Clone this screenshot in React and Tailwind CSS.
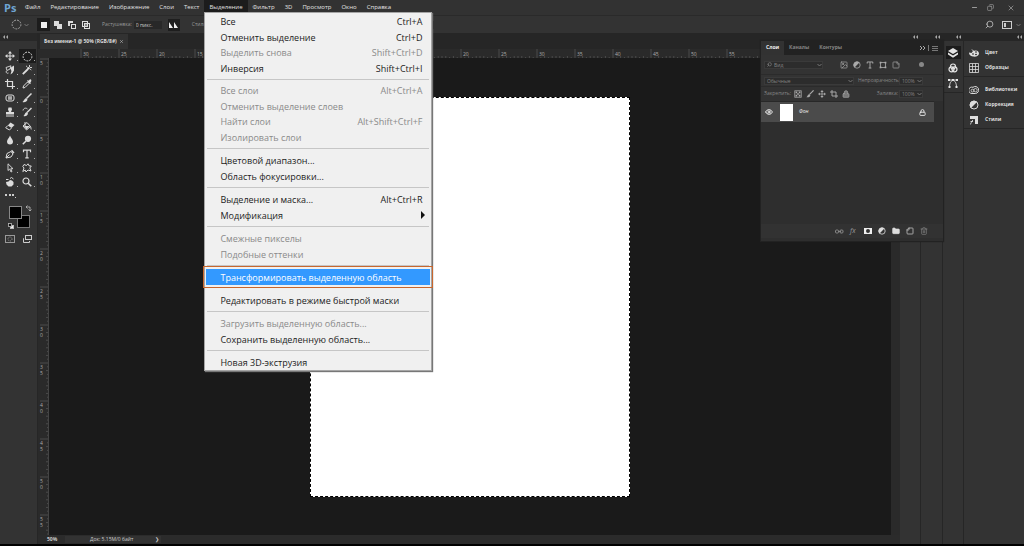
import { Image, Type, Search, Trash2, Folder, Lock, Eye, Copy, Minus, X, StickyNote } from "lucide-react";

const menus = ["Файл", "Редактирование", "Изображение", "Слои", "Текст", "Выделение", "Фильтр", "3D", "Просмотр", "Окно", "Справка"];

const groups = [
  [
    { label: "Все", keys: "Ctrl+A" },
    { label: "Отменить выделение", keys: "Ctrl+D" },
    { label: "Выделить снова", keys: "Shift+Ctrl+D", off: true },
    { label: "Инверсия", keys: "Shift+Ctrl+I" },
  ],
  [
    { label: "Все слои", keys: "Alt+Ctrl+A", off: true },
    { label: "Отменить выделение слоев", off: true },
    { label: "Найти слои", keys: "Alt+Shift+Ctrl+F", off: true },
    { label: "Изолировать слои", off: true },
  ],
  [{ label: "Цветовой диапазон..." }, { label: "Область фокусировки..." }],
  [{ label: "Выделение и маска...", keys: "Alt+Ctrl+R" }, { label: "Модификация", sub: true }],
  [{ label: "Смежные пикселы", off: true }, { label: "Подобные оттенки", off: true }],
  [{ label: "Трансформировать выделенную область", active: true }],
  [{ label: "Редактировать в режиме быстрой маски" }],
  [{ label: "Загрузить выделенную область...", off: true }, { label: "Сохранить выделенную область..." }],
  [{ label: "Новая 3D-экструзия" }],
];

const groupHeight = { 1: "h-[16px]", 2: "h-[32px]", 4: "h-[62px]" };

function SelectMenu() {
  return (
    <div className="absolute left-0 top-[12px] z-30 w-[228px] border border-[#a5a5a5] bg-[#f0f0f0] px-px pt-px text-[9px] text-[#1c1c1c] shadow-[1px_1px_1px_#777]">
      {groups.map((group, i) => (
        <div key={i}>
          {i > 0 && (
            <div className="flex h-[7px] items-center px-px">
              <hr className={"w-full " + (groups[i - 1][0].active ? "border-transparent" : "border-[#c6c6c6]")} />
            </div>
          )}
          <div className={"grid auto-rows-fr " + groupHeight[group.length]}>
            {group.map((item) => (
              <button
                key={item.label}
                disabled={item.off}
                className={
                  "flex items-center justify-between whitespace-nowrap pl-[14px] pr-[8px] leading-[15px] " +
                  (item.active ? "bg-[#3399ff] text-white outline outline-offset-2 outline-[#c8662d]" : item.off ? "text-[#8a8a8a]" : "")
                }
              >
                <span>{item.label}</span>
                {item.keys && <span>{item.keys}</span>}
                {item.sub && <svg width="5" height="8" viewBox="0 0 5 8" className="-mr-1"><path d="M0 0 L4 4 L0 8Z" fill="#111" /></svg>}
              </button>
            ))}
          </div>
        </div>
      ))}
    </div>
  );
}

function Chevron() {
  return (
    <svg width="5" height="4" viewBox="0 0 5 4" className="shrink-0">
      <path d="M.5 1L2.5 3L4.5 1" fill="none" stroke="#777" />
    </svg>
  );
}

function Arrows() {
  return (
    <svg width="5" height="4" viewBox="0 0 5 4" fill="#aaa">
      <path d="M2 0V4L0 2ZM5 0V4L3 2Z" />
    </svg>
  );
}

// Small 10x10 glyphs shared by the toolbar and the panels
function Glyph({ children, size = 10 }) {
  return (
    <svg width={size} height={size} viewBox="0 0 10 10" fill="currentColor" stroke="none" className="shrink-0">
      {children}
    </svg>
  );
}

const line = { fill: "none", stroke: "currentColor" };

const MoveIcon = (p) => (
  <Glyph {...p}>
    <path d="M5 0L7 2.4H3ZM5 10L3 7.600H7ZM0 5L2.400 3V7ZM10 5L7.600 7V3Z" />
    <path d="M5 2V8M2 5H8" {...line} />
  </Glyph>
);
const Marquee = () => (
  <Glyph size={11}><circle cx="5" cy="5" r="4" {...line} strokeDasharray="1.7 1" strokeWidth=".9" /></Glyph>
);
const LassoIcon = () => (
  <Glyph>
    <path d="M1 2.500L6 .8L5 4L2 5.500ZM2 5.500C0 7 2 9 3.500 8" {...line} strokeWidth=".9" />
    <path d="M5 3L9 .5V5.500L7.500 8L5.500 9.500L6.500 6Z" />
  </Glyph>
);
const WandIcon = () => (
  <Glyph>
    <path d="M.8 9.200L6 4" {...line} strokeWidth="1.800" />
    <path d="M7.500 0V2M10 2.500H8M9.300 5L8 4M4 .8L5.500 2.200" {...line} strokeWidth=".9" />
    <circle cx="6.500" cy="3.300" r="1.200" />
  </Glyph>
);
const CropIcon = (p) => (
  <Glyph {...p}><path d="M2.500 0V7.500H10M0 2.500H7.500V10" {...line} strokeWidth="1.200" /></Glyph>
);
const DropperIcon = () => (
  <Glyph>
    <path d="M1 9L1.500 7L5.500 3L7 4.500L3 8.500Z" {...line} />
    <path d="M5 2L8 5L9 4.200L8.300 3.500C10 2 9.500 0 8 .2L6.500 1.700L5.800 1Z" />
  </Glyph>
);
const PatchIcon = () => (
  <Glyph>
    <rect x="1" y="2" width="8" height="6" rx="2" {...line} />
    <rect x="3" y="3.200" width="4" height="3.600" opacity=".7" />
  </Glyph>
);
const BrushIcon = (p) => (
  <Glyph {...p}>
    <path d="M9.500 .5L4.500 5.500" {...line} strokeWidth="1.500" />
    <path d="M4 5L5.500 6.500C5 9 2.500 9.500 .5 9C2 8 2 6 4 5Z" />
  </Glyph>
);
const StampIcon = () => (
  <Glyph><path d="M3.500 .5H6.500L7 2.500L6 5H9V7.500H1V5H4L3 2.500ZM1 8.500H9V9.500H1Z" /></Glyph>
);
const HistoryBrushIcon = () => (
  <Glyph>
    <path d="M9.500 1L5 5.500" {...line} strokeWidth="1.500" />
    <path d="M4.500 5L6 6.500C5.500 9 3.500 9.500 1.500 9C3 8 2.500 6 4.500 5Z" />
    <path d="M1 3.500C1.500 1 4 .5 5.500 2" {...line} strokeWidth=".9" />
  </Glyph>
);
const EraserIcon = () => (
  <Glyph>
    <path d="M5.500 1.500L9.500 4L6.500 7L2.800 4.500Z" />
    <path d="M2.800 4.500L.7 6.800L4.500 9L6.500 7" {...line} />
  </Glyph>
);
const BucketIcon = () => (
  <Glyph>
    <path d="M1 5L5 1.500L8.500 5.500L4.500 9ZM3 5L3 1" {...line} />
    <path d="M2 5H8L4.500 8.500Z" />
    <path d="M8 5C9.500 5.500 9.800 7 9.300 9C8.300 8 8.500 6.500 8 5Z" />
  </Glyph>
);
const DropIcon = () => (
  <Glyph><path d="M5 .5C5.500 2.500 8 4.500 8 6.600A3 3 0 0 1 2 6.600C2 4.500 4.500 2.500 5 .5Z" /></Glyph>
);
const DodgeIcon = () => (
  <Glyph>
    <circle cx="6" cy="3.800" r="3.100" />
    <path d="M4 6L.8 9.200" {...line} strokeWidth="1.500" />
  </Glyph>
);
const PenIcon = () => (
  <Glyph>
    <path d="M1 9L2 4.500L6 2.500L8 5L6 8ZM1 9L4.500 5.500" {...line} />
    <path d="M6 2L7 .8L9.500 3.500L8.300 4.500Z" />
  </Glyph>
);
const TypeIcon = (p) => (
  <Glyph {...p}>
    <path d="M1.500 3.200V1.200H8.500V3.200M5 1.200V8.800M3.300 8.800H6.700" {...line} strokeWidth="1.200" />
  </Glyph>
);
const ArrowIcon = () => (
  <Glyph><path d="M3 .8V7.500L4.700 6L6 9L7 8.500L5.800 5.700H8Z" {...line} strokeWidth=".9" /></Glyph>
);
const ShapeIcon = () => (
  <Glyph><path d="M2 1.500L4.500 2.500L6 .8L7 2.800L9.300 3L7.800 5L9 8L6 7L4 9L3.200 7L.8 8.500L2 5L.8 3.500Z" {...line} /></Glyph>
);
const HandIcon = () => (
  <Glyph>
    <path d="M1 5L3.500 4.500L5 3L7 3.500L8.500 5V7.500L6.500 9.500H3.500L1.500 7.500Z" />
    <path d="M1 2.500H3.500M5 1.500L6.500 .5L8.500 2" {...line} />
  </Glyph>
);
const ZoomIcon = () => (
  <Glyph><circle cx="4" cy="4" r="3" {...line} strokeWidth="1.200" /><path d="M6.200 6.200L9.300 9.300" {...line} strokeWidth="1.600" /></Glyph>
);
const AdjustIcon = (p) => (
  <Glyph {...p}><circle cx="5" cy="5" r="4" {...line} /><path d="M8 2A4.200 4.200 0 0 0 2 8Z" /></Glyph>
);
const FrameIcon = (p) => (
  <Glyph {...p}>
    <rect x="2" y="2" width="6" height="6" {...line} />
    <path d="M.8 .8H3V3H.8ZM7 .8H9.200V3H7ZM.8 7H3V9.200H.8ZM7 7H9.200V9.200H7Z" />
  </Glyph>
);
const CheckerIcon = (p) => (
  <Glyph {...p}><rect x="1" y="1" width="8" height="8" {...line} /><path d="M2 2H4V4H2ZM6 2H8V4H6ZM4 4H6V6H4ZM2 6H4V8H2ZM6 6H8V8H6Z" /></Glyph>
);
const LayersIcon = () => (
  <Glyph><path d="M5 0L10 3L5 6L0 3Z" /><path d="M0 4.500L5 7.500L10 4.500V6.500L5 9.700L0 6.500Z" /></Glyph>
);
const ChannelsIcon = () => (
  <Glyph>
    <circle cx="5" cy="3.500" r="2.500" {...line} strokeWidth="1.200" />
    <circle cx="3.500" cy="6.300" r="2.500" {...line} strokeWidth="1.200" />
    <circle cx="6.500" cy="6.300" r="2.500" {...line} strokeWidth="1.200" />
  </Glyph>
);
const PathsIcon = () => (
  <Glyph>
    <path d="M0 2H10M1.500 9.500C1.500 5 3 2.500 5 2.500S8.500 5 8.500 9.500" {...line} strokeWidth=".9" />
    <path d="M0 1H2V3H0ZM4 1H6V3H4ZM8 1H10V3H8ZM.5 8H2.500V10H.5ZM7.500 8H9.500V10H7.500Z" />
  </Glyph>
);
const PaletteIcon = () => (
  <Glyph>
    <path fillRule="evenodd" d="M4 3C8 1.500 10 3.500 10 5.500C10 8 7 9 4 8.500C1 8 0 6.500 0 4.500L2.500 5ZM3 6A.9 .7 0 1 0 5 6A.9 .7 0 1 0 3 6M6 6.500A.9 .7 0 1 0 8 6.500A.9 .7 0 1 0 6 6.500M6 4A.9 .7 0 1 0 8 4A.9 .7 0 1 0 6 4" />
    <path d="M3 1.500L5.500 4" {...line} />
  </Glyph>
);
const SwatchesIcon = () => (
  <Glyph><path d="M.5 .5H9.500V9.500H.5ZM.5 3.500H9.500M.5 6.500H9.500M3.500 .5V9.500M6.500 .5V9.500" {...line} strokeWidth=".8" /></Glyph>
);
const LibrariesIcon = () => (
  <Glyph>
    <path d="M3 8.500A3.200 3.200 0 1 1 4 2.300A3.500 3.500 0 1 1 6.500 8.500Z" {...line} />
    <circle cx="3.500" cy="5.600" r="1.400" {...line} strokeWidth=".8" />
    <circle cx="6.500" cy="5.200" r="1.700" {...line} strokeWidth=".8" />
  </Glyph>
);
const StylesIcon = () => (
  <Glyph>
    <path d="M1 1H9V9H6V4H1Z" />
    <path d="M1 9.500C2.500 9 2 6 4 5M1.500 6.500H4" {...line} strokeWidth=".9" />
  </Glyph>
);

function Header() {
  return (
    <header className="relative z-30 flex h-[15px] items-center bg-[#323232]">
      <span className="w-[20px] pl-[4px] text-[11px] font-bold leading-[14px] text-[#6fa5d3]">Ps</span>
      <nav className="flex h-full items-start text-[6px] text-[#e2e2e2]">
        {menus.map((name) => (
          <div key={name} className="relative">
            <button className={"h-[14px] px-[5px] leading-[14px] " + (name === "Выделение" ? "bg-[#1c1c1c]" : "")}>{name}</button>
            {name === "Выделение" && <SelectMenu />}
          </div>
        ))}
      </nav>
      <div className="ml-auto flex items-center gap-[9px] pr-[9px] text-[#aaa]">
        <button aria-label="Свернуть"><Minus size={7} strokeWidth={3} /></button>
        <button aria-label="Окно"><Copy size={7} className="-scale-x-100" /></button>
        <button aria-label="Закрыть" className="pl-1"><X size={8} /></button>
      </div>
    </header>
  );
}

function OptionsBar() {
  return (
    <div className="flex h-[18px] items-center border-t border-[#2a2a2a] bg-[#333] pl-[11px] text-[5px] text-[#999]">
      <span className="flex items-center gap-[2px] text-[#aaa]"><Marquee /><Chevron /></span>
      <div className="ml-[8px] flex items-center gap-[1px]">
        <button aria-label="Новая" className="grid size-[13px] place-items-center bg-[#1c1c1c]"><span className="size-[6px] bg-[#eee]" /></button>
        <button aria-label="Добавить" className="grid size-[13px] place-items-center">
          <svg width="8" height="8"><path d="M0 0H5V3H8V8H3V5H0Z" fill="#ddd" /></svg>
        </button>
        <button aria-label="Вычесть" className="grid size-[13px] place-items-center">
          <svg width="8" height="8"><path d="M0 0H5V2H2V5H0Z" fill="#ddd" /><rect x="3.5" y="3.5" width="4" height="4" fill="none" stroke="#ddd" /></svg>
        </button>
        <button aria-label="Пересечение" className="grid size-[13px] place-items-center">
          <svg width="8" height="8" fill="none" stroke="#ddd"><rect x=".5" y=".5" width="5" height="5" /><rect x="2.5" y="2.5" width="5" height="5" /><path d="M3 4H5" /></svg>
        </button>
      </div>
      <label className="ml-[10px] flex items-center gap-[2px]">
        Растушевка:
        <input className="h-[8px] w-[28px] bg-[#282828] px-[2px] text-[#ccc]" defaultValue="0 пикс." />
      </label>
      <button aria-label="Сглаживание" className="ml-[6px] grid size-[12px] place-items-center bg-[#1e1e1e]">
        <svg width="10" height="6" fill="#eee"><path d="M0 0L4 6H0ZM5 0L9 6H5Z" /></svg>
      </button>
      <span className="ml-3 w-[200px]">Стиль:</span>
      <input aria-label="Высота" className="h-[8px] w-[42px] bg-[#282828]" />
      <span className="ml-auto flex items-center gap-2 pr-[3px] text-[#ccc]">
        <Search size={9} className="-scale-x-100" />
        <span className="flex items-center gap-1">
          <svg width="10" height="8"><rect x=".5" y=".5" width="9" height="7" fill="none" stroke="#ccc" /><path d="M2 2H4V6H2Z" fill="#ccc" /></svg>
          <Chevron />
        </span>
      </span>
    </div>
  );
}

const tools = [
  ["Перемещение", MoveIcon], ["Овальная область", Marquee],
  ["Лассо", LassoIcon], ["Волшебная палочка", WandIcon],
  ["Рамка", CropIcon], ["Пипетка", DropperIcon],
  ["Восстанавливающая кисть", PatchIcon], ["Кисть", BrushIcon],
  ["Штамп", StampIcon], ["Архивная кисть", HistoryBrushIcon],
  ["Ластик", EraserIcon], ["Заливка", BucketIcon],
  ["Размытие", DropIcon], ["Осветлитель", DodgeIcon],
  ["Перо", PenIcon], ["Текст", TypeIcon],
  ["Выделение контура", ArrowIcon], ["Произвольная фигура", ShapeIcon],
  ["Рука", HandIcon], ["Масштаб", ZoomIcon],
];

function Toolbar() {
  return (
    <aside className="w-[38px] shrink-0 border-r border-[#262626] bg-[#333]">
      <div className="flex h-[8px] items-center bg-[#282828] pl-[3px]"><Arrows /></div>
      <div className="mt-[8px] grid grid-cols-2 pl-px pr-px">
        {tools.map(([name, Icon]) => (
          <button
            key={name}
            aria-label={name}
            className={"relative grid h-[14px] place-items-center text-[#dcdcdc] " + (name === "Овальная область" ? "bg-[#1c1c1c]" : "")}
          >
            <Icon />
            <span className="absolute bottom-[2px] right-px size-px bg-[#aaa]" />
          </button>
        ))}
      </div>
      <svg width="12" height="13" className="ml-[5px]"><path d="M0 5H2V7H0ZM4 5H6V7H4ZM7 5H9V7H7ZM10 8H11V9H10Z" fill="#ccc" /></svg>
      <svg width="36" height="48" viewBox="0 0 36 48">
        <rect x="17.500" y="13.500" width="12" height="12" fill="#000" stroke="#777" />
        <rect x="9.500" y="4.500" width="12" height="12" fill="#000" stroke="#888" />
        <path d="M26 5H30V9M27.500 3.500L26 5L27.500 6.500M28.500 7.500L30 9L31.500 7.500" fill="none" stroke="#bbb" strokeWidth=".8" />
        <rect x="10.500" y="23.500" width="3" height="3" fill="#eee" stroke="#bbb" />
        <rect x="8.500" y="21.500" width="3" height="3" fill="#111" stroke="#bbb" strokeWidth=".8" />
        <rect x="5.500" y="33.500" width="9" height="7" fill="none" stroke="#999" />
        <circle cx="10" cy="37" r="2" fill="none" stroke="#999" strokeDasharray="1 1" />
        <rect x="25.500" y="33.500" width="6" height="4" fill="none" stroke="#ccc" />
        <path d="M24 36.500H23.500V40.500H29.500V39" fill="none" stroke="#ccc" />
      </svg>
    </aside>
  );
}

// null marks keep a tick but carry no number: the open menu lies over them
const across = [30, 25, 20, 15, null, null, null, null, null, null, 20, 25, 30, 35, 40, 45, 50, 55];
const down = [5, 0, 5, 10, 15, 20, 25, 30, 35, 40, 45, 50, 55];
const STEP = 38;

function TopRuler() {
  return (
    <svg className="h-[9px] w-full shrink-0 bg-[#2a2a2a]">
      {across.map((n, i) => (
        <g key={i} transform={`translate(${43 + i * STEP} 0)`} stroke="#5a5a5a" strokeWidth=".7">
          <path d="M0 0V9M7.600 7V9M15.200 7V9M22.800 7V9M30.400 7V9M3.800 8V9M11.400 8V9M19 7V9M26.600 8V9M34.200 8V9" />
          {n !== null && <text x="2" y="7" fontSize="5" fill="#aaa" stroke="none">{n}</text>}
        </g>
      ))}
    </svg>
  );
}

function SideRuler() {
  return (
    <svg className="w-[11px] shrink-0 border-r border-[#444] bg-[#2a2a2a]">
      {down.map((n, i) => (
        <g key={i} transform={`translate(0 ${1 + i * STEP})`} stroke="#5a5a5a" strokeWidth=".7">
          <path d="M2 0H11M8 7.600H11M8 15.200H11M8 22.800H11M8 30.400H11M9 3.800H11M9 11.400H11M9 19H11M9 26.600H11M9 34.200H11" />
          {String(n).split("").map((d, k) => (
            <text key={k} x="2" y={6 + k * 6} fontSize="5" fill="#aaa" stroke="none">{d}</text>
          ))}
        </g>
      ))}
    </svg>
  );
}

function Workspace() {
  return (
    <main className="flex min-w-0 flex-1 flex-col bg-[#262626]">
      <div className="flex h-[16px] items-end pl-[2px]">
        <button className="flex h-[15px] w-[88px] items-center justify-between whitespace-nowrap bg-[#323232] px-[4px] text-[5px] font-bold text-[#ddd]">
          Без имени-1 @ 50% (RGB/8#)
          <X size={5} />
        </button>
      </div>
      <div className="flex min-h-0 flex-1">
        <div className="flex min-w-0 flex-1 flex-col">
          <TopRuler />
          <div className="flex min-h-0 flex-1">
            <SideRuler />
            <div className="flex flex-1 items-center justify-center bg-[#1a1a1a]">
              <div className="h-[400px] w-[320px] border border-dashed border-black bg-white" />
            </div>
          </div>
        </div>
        <div className="w-[9px] shrink-0 bg-[#2a2a2a]" />
      </div>
      <footer className="flex h-[9px] items-center bg-[#2b2b2b] text-[5px] text-[#ccc]">
        <span className="w-[27px] pl-[9px] font-bold">50%</span>
        <span className="flex w-[96px] items-center justify-between bg-[#323232] pl-[25px] pr-[2px]">Док: 5.15M/0 байт<span>❯</span></span>
      </footer>
    </main>
  );
}

function Select({ label, text, width }) {
  return (
    <span className={"flex h-[8px] shrink-0 items-center border border-[#3a3a3a] bg-[#2c2c2c] " + width}>
      <select aria-label={label} className="min-w-0 flex-1 appearance-none pl-[2px] leading-[6px]"><option>{text}</option></select>
      <Chevron />
    </span>
  );
}

function LayersPanel() {
  return (
    <section className="absolute right-[81px] top-[8px] z-10 flex h-[200px] w-[182px] flex-col bg-[#2e2e2e] text-[5px] text-[#858585] shadow-[0_0_1px_1px_#222]">
      <div className="flex h-[14px] items-center bg-[#222]">
        <button className="h-full bg-[#323232] px-[5px] font-bold text-[#eee]">Слои</button>
        <button className="px-[5px] font-bold">Каналы</button>
        <button className="px-[5px] font-bold">Контуры</button>
        <svg width="22" height="6" className="ml-auto mr-[2px]" fill="none" stroke="#aaa">
          <path d="M1 1L3 3L1 5M4 1L6 3L4 5" />
          <path d="M9.500 0V6M13 1.500H19M13 3.500H19M13 5.500H19" stroke="#777" />
        </svg>
      </div>
      <div className="flex h-[19px] items-center bg-[#333] pl-[3px]">
        <span className="flex h-[8px] w-[59px] items-center border border-[#3a3a3a] bg-[#2c2c2c] pl-[2px]">
          <Search size={5} strokeWidth={3} className="-scale-x-100" />
          <select aria-label="Тип фильтра" className="min-w-0 flex-1 appearance-none pl-[2px] leading-[6px]"><option>Вид</option></select>
          <Chevron />
        </span>
        <div className="ml-[17px] flex gap-[5px] text-[#aaa]">
          <Image size={8} /><AdjustIcon size={8} /><TypeIcon size={8} /><FrameIcon size={8} /><StickyNote size={8} />
        </div>
        <span className="ml-[19px] size-[5px] rounded-full bg-[#888]" />
      </div>
      <div className="flex h-[12px] items-center border-t border-[#2b2b2b] bg-[#333] pl-[3px]">
        <Select label="Режим" text="Обычные" width="w-[90px]" />
        <span className="ml-[4px] mr-px w-[40px] whitespace-nowrap text-right">Непрозрачность:</span>
        <Select label="Непрозрачность" text="100%" width="w-[24px]" />
      </div>
      <div className="flex h-[15px] items-center border-t border-[#2b2b2b] bg-[#333] pl-[3px]">
        <span className="w-[30px]">Закрепить:</span>
        <span className="flex w-[64px] gap-[4px] text-[#aaa]">
          <CheckerIcon size={8} /><BrushIcon size={8} /><MoveIcon size={8} /><CropIcon size={8} /><Lock size={8} fill="#777" />
        </span>
        <span className="mr-px w-[40px] text-right">Заливка:</span>
        <Select label="Заливка" text="100%" width="w-[24px]" />
      </div>
      <div className="mr-[9px] flex h-[21px] items-center border-t border-[#282828] bg-[#4b4b4b] text-[#eee]">
        <Eye size={8} strokeWidth={3} className="ml-[4px]" />
        <span className="ml-[7px] h-[17px] w-[13px] bg-white" />
        <i className="ml-[6px]">Фон</i>
        <Lock size={7} strokeWidth={3} className="ml-auto mr-[8px]" />
      </div>
      <div className="mb-[3px] mt-auto flex h-[14px] items-center justify-end gap-[6px] bg-[#323232] pr-[15px] text-[#ddd]">
        <svg width="9" height="5" fill="none" stroke="#888"><rect x=".5" y="1" width="3" height="3" rx="1" /><rect x="5" y="1" width="3" height="3" rx="1" /><path d="M3 2.500H6" /></svg>
        <i className="w-[8px] text-[7px] leading-[8px] text-[#999]">fx</i>
        <svg width="8" height="8"><path d="M0 1H8V7H0ZM4 2A2 2 0 1 0 4 6A2 2 0 1 0 4 2" fill="#eee" fillRule="evenodd" /></svg>
        <AdjustIcon size={8} />
        <Folder size={8} fill="currentColor" />
        <StickyNote size={8} className="-scale-x-100" />
        <Trash2 size={8} className="text-[#888]" />
      </div>
    </section>
  );
}

function DockItem({ icon: Icon, children }) {
  return (
    <button className="flex h-[15px] items-center gap-[6px] pl-[5px] text-[5px] font-bold text-[#ddd]">
      <Icon />
      {children}
    </button>
  );
}

function Strip() {
  return <div className="flex h-[8px] shrink-0 items-center justify-end bg-[#262626] pr-[2px]"><Arrows /></div>;
}

function Docks() {
  return (
    <aside className="flex shrink-0 bg-[#333]">
      <div className="w-[21px] border-r border-[#262626]"><Strip /></div>
      <div className="w-[22px] border-r border-[#262626]"><Strip /></div>
      <div className="w-[21px] border-r border-[#262626]">
        <Strip />
        <div className="flex flex-col items-center gap-[2px] border-b border-[#262626] pb-[3px] pt-[5px] text-[#e4e4e4]">
          <button aria-label="Слои" className="grid h-[13px] w-[15px] place-items-center bg-[#1c1c1c]"><LayersIcon /></button>
          <button aria-label="Каналы" className="grid size-[13px] place-items-center"><ChannelsIcon /></button>
          <button aria-label="Контуры" className="grid size-[13px] place-items-center"><PathsIcon /></button>
        </div>
      </div>
      <div className="flex w-[60px] flex-col">
        <Strip />
        <div className="flex flex-col border-b border-[#262626] pb-px pt-[4px]">
          <DockItem icon={PaletteIcon}>Цвет</DockItem>
          <DockItem icon={SwatchesIcon}>Образцы</DockItem>
        </div>
        <div className="flex flex-col border-b border-[#262626] pb-px pt-[5px]">
          <DockItem icon={LibrariesIcon}>Библиотеки</DockItem>
          <DockItem icon={AdjustIcon}>Коррекция</DockItem>
          <DockItem icon={StylesIcon}>Стили</DockItem>
        </div>
      </div>
    </aside>
  );
}

export default function App() {
  return (
    <div className="flex h-screen flex-col overflow-hidden border-b-2 border-black bg-[#333] font-['Open_Sans','Noto_Sans',sans-serif]">
      <Header />
      <OptionsBar />
      <div className="relative flex min-h-0 flex-1">
        <Toolbar />
        <Workspace />
        <Docks />
        <LayersPanel />
      </div>
    </div>
  );
}
